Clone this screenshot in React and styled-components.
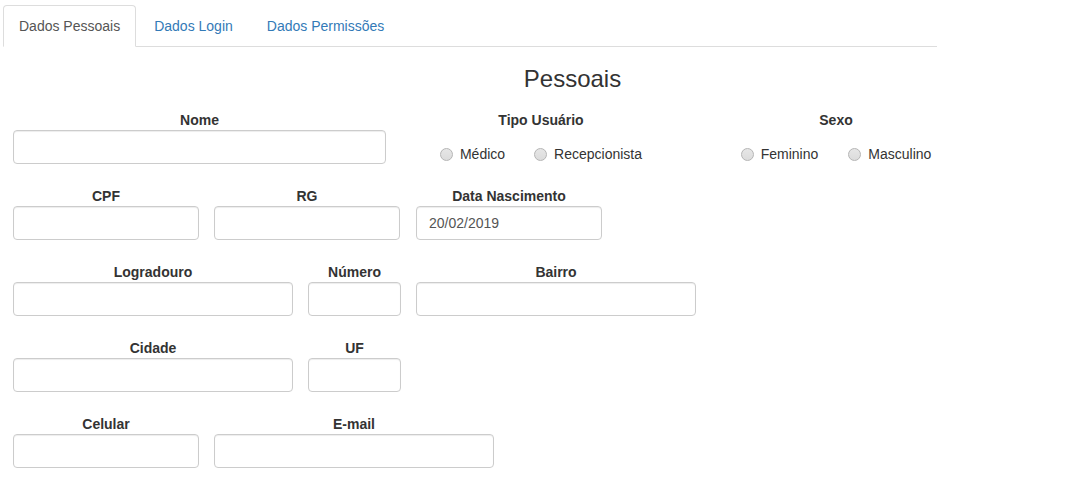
import React from "react";
import styled, { createGlobalStyle } from "styled-components";

const GlobalStyle = createGlobalStyle`
  * { box-sizing: border-box; }
  body {
    margin: 0;
    background: #fff;
    font-family: "Liberation Sans", Arial, sans-serif;
    font-size: 14px;
    line-height: 20px;
    color: #333;
  }
`;

const Page = styled.div`
  padding: 5px 0 0 3px;
`;

const Tabs = styled.ul`
  display: flex;
  width: 934px;
  margin: 0;
  padding: 0;
  list-style: none;
  border-bottom: 1px solid #ddd;
`;

const Tab = styled.li`
  margin-right: 2px;
  margin-bottom: -1px;
  padding: 10px 15px;
  line-height: 20px;
  border: 1px solid ${(p) => (p.$active ? "#ddd" : "transparent")};
  border-bottom-color: ${(p) => (p.$active ? "#fff" : "transparent")};
  border-radius: 4px 4px 0 0;
  background: ${(p) => (p.$active ? "#fff" : "transparent")};
  color: ${(p) => (p.$active ? "#555" : "#337ab7")};
  cursor: pointer;
`;

const Title = styled.h3`
  margin: 19px 0 18px;
  padding-left: 52px;
  font-size: 24px;
  font-weight: 500;
  line-height: 26px;
  text-align: center;
  color: #333;
`;

const Form = styled.form`
  padding-left: 10px;
`;

const Row = styled.div`
  display: flex;
  gap: 15px;
  margin-bottom: 22px;
`;

const Field = styled.div`
  width: ${(p) => p.$w}px;
  margin-left: ${(p) => p.$shift || 0}px;
`;

const Label = styled.label`
  display: block;
  text-align: center;
  font-weight: bold;
  line-height: 20px;
  color: #333;
`;

const Input = styled.input`
  display: block;
  width: 100%;
  height: 34px;
  padding: 6px 12px;
  font-family: inherit;
  font-size: 14px;
  color: #555;
  background: #fff;
  border: 1px solid #ccc;
  border-radius: 4px;
  box-shadow: inset 0 1px 1px rgba(0, 0, 0, 0.075);
  outline: none;
`;

const RadioGroup = styled.div`
  display: flex;
  justify-content: center;
  gap: ${(p) => p.$gap}px;
  margin-top: 14px;
  line-height: 20px;
`;

const Option = styled.label`
  display: inline-flex;
  align-items: center;
  gap: 7px;
  color: #333;
`;

const Radio = styled.input`
  appearance: none;
  width: 13px;
  height: 13px;
  margin: 0;
  border: 1px solid #b5b5b5;
  border-radius: 50%;
  background: linear-gradient(#e6e6e6, #dcdcdc);
`;

const fieldsRows = [
  [
    { label: "CPF", w: 186 },
    { label: "RG", w: 186 },
    { label: "Data Nascimento", w: 186, value: "20/02/2019", shift: 1 },
  ],
  [
    { label: "Logradouro", w: 280 },
    { label: "Número", w: 93 },
    { label: "Bairro", w: 280 },
  ],
  [
    { label: "Cidade", w: 280 },
    { label: "UF", w: 93 },
  ],
  [
    { label: "Celular", w: 186 },
    { label: "E-mail", w: 280 },
  ],
];

export default function App() {
  return (
    <Page>
      <GlobalStyle />
      <Tabs>
        <Tab $active>Dados Pessoais</Tab>
        <Tab>Dados Login</Tab>
        <Tab>Dados Permissões</Tab>
      </Tabs>

      <Title>Pessoais</Title>

      <Form onSubmit={(e) => e.preventDefault()}>
        <Row>
          <Field $w={373}>
            <Label>Nome</Label>
            <Input type="text" />
          </Field>
          <Field $w={280}>
            <Label>Tipo Usuário</Label>
            <RadioGroup $gap={29}>
              <Option>
                <Radio type="radio" name="tipo" />
                Médico
              </Option>
              <Option>
                <Radio type="radio" name="tipo" />
                Recepcionista
              </Option>
            </RadioGroup>
          </Field>
          <Field $w={280}>
            <Label>Sexo</Label>
            <RadioGroup $gap={30}>
              <Option>
                <Radio type="radio" name="sexo" />
                Feminino
              </Option>
              <Option>
                <Radio type="radio" name="sexo" />
                Masculino
              </Option>
            </RadioGroup>
          </Field>
        </Row>

        {fieldsRows.map((row, i) => (
          <Row key={i}>
            {row.map((f) => (
              <Field key={f.label} $w={f.w} $shift={f.shift}>
                <Label>{f.label}</Label>
                <Input type="text" defaultValue={f.value || ""} />
              </Field>
            ))}
          </Row>
        ))}
      </Form>
    </Page>
  );
}
